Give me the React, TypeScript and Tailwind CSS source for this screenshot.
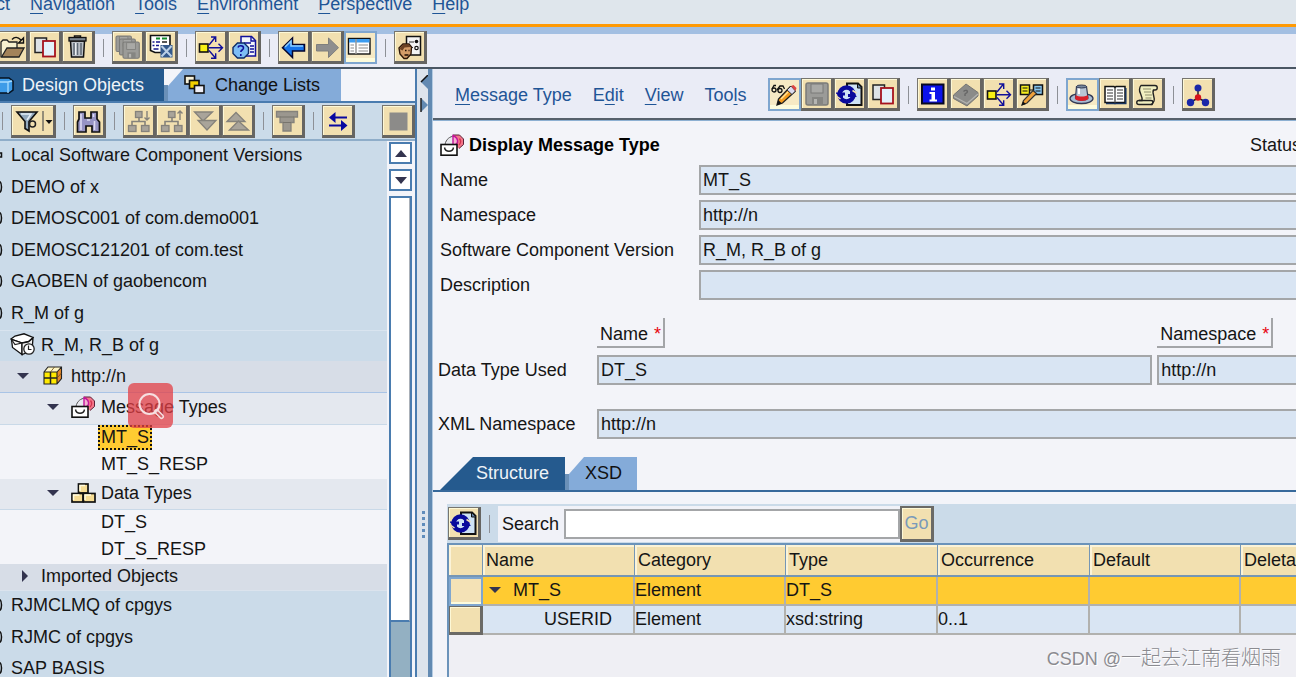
import React from "react";

type Children = { children: React.ReactNode };

/* ---------- toolbar primitives ---------- */

function ToolButton({
  label,
  pressed = false,
  wide = false,
  children,
}: Children & { label: string; pressed?: boolean; wide?: boolean }) {
  const look = pressed
    ? "border-2 border-[#7fa6cf] bg-[#f6e9c4] pb-px pr-px shadow-[inset_0_-4px_0_#fdfbdc]"
    : "border-t border-l border-b-[3px] border-r-[3px] border-t-[#77756f] border-l-[#77756f] border-b-[#666562] border-r-[#666562] bg-[#f2e0b0] pt-px pl-px shadow-[inset_1px_1px_0_#fdf8d6]";
  return (
    <button type="button" aria-label={label} className={`${look} h-[33px] shrink-0 ${wide ? "w-[45px]" : "w-[33px]"}`}>
      <svg viewBox={wide ? "0 0 40 28" : "0 0 28 28"} className={wide ? "block h-7 w-10" : "block size-7"} aria-hidden="true">
        {children}
      </svg>
    </button>
  );
}

function Sep() {
  return (
    <span className="flex h-[33px] w-[17px] shrink-0 items-center justify-center">
      <span className="h-[18px] w-px bg-[#8d9096]" />
    </span>
  );
}

function Mnemonic({ text, at = 0 }: { text: string; at?: number }) {
  return (
    <button type="button" className="whitespace-nowrap text-[#1f5596]">
      {text.slice(0, at)}
      <span className="underline decoration-1 underline-offset-3">{text[at]}</span>
      {text.slice(at + 1)}
    </button>
  );
}

/* ---------- icons ---------- */

const CopyIcon = (
  <g>
    <rect x="4" y="5" width="11.500" height="14.500" fill="#dde2e6" stroke="#222" strokeWidth="1.500" />
    <rect x="12" y="8" width="12" height="15.500" fill="#e3f1fb" stroke="#a5121d" strokeWidth="1.800" />
  </g>
);

const WhereUsedIcon = (
  <g stroke="#10109a" strokeWidth="1.4" fill="none">
    <rect x="2.500" y="11" width="8.500" height="8" fill="#f8f013" stroke="#111" strokeWidth="1.600" />
    <path d="M11.500 14.800H25M21.500 10.800l4 4-4 4M12 12l6.500-8M14 4h4.700v5M12 17.500l6.500 7.500M14 25.300h4.700v-5" />
  </g>
);

const RefreshIcon = (
  <g>
    <path d="M11 3.500h11l3.500 3.500V25H11z" fill="#cfe3f5" stroke="#111" strokeWidth="2" />
    <path d="M21.500 4v4h4" fill="#5e7fa5" stroke="#111" />
    <circle cx="10.500" cy="14.500" r="7" fill="#cfe3f5" stroke="#0a0a9c" strokeWidth="4.500" />
    <path d="M0 12.500h9v3H7v3L0 13.500zM20.500 17h-8.500v-3h2v-3l6.500 5z" fill="#0a0a9c" />
    <path d="M1 16.500l3.500 2.500M16.500 10.500l4 2.500" stroke="#f2e0b0" strokeWidth="1.500" />
  </g>
);

const Floppy = ({ x, y, s }: { x: number; y: number; s: number }) => (
  <g transform={`translate(${x} ${y}) scale(${s})`}>
    <rect x="0" y="0" width="22" height="22" rx="2" fill="#9b9b98" stroke="#7b7b78" strokeWidth="1.5" />
    <rect x="5" y="1" width="12" height="9" fill="#a9a9a6" stroke="#7b7b78" strokeWidth="1" />
    <rect x="6" y="14" width="11" height="8" fill="#858582" />
    <rect x="8" y="16" width="3" height="5" fill="#b5b5b2" />
  </g>
);

const grayBox = { fill: "#a9a49a", stroke: "#85827b", strokeWidth: 1.3 };

const HierarchyBase = (
  <g>
    <path d="M14 10v5M7 18v-3.500h13V18" fill="none" stroke="#85827b" strokeWidth="1.600" />
    <rect x="10.500" y="4.500" width="6.500" height="6" {...grayBox} />
    <rect x="3.500" y="18.500" width="7.500" height="6" {...grayBox} />
    <rect x="16.500" y="18.500" width="7.500" height="6" {...grayBox} />
  </g>
);

function MessageTypeIcon() {
  return (
    <svg viewBox="0 0 24 22" className="h-[22px] w-6 shrink-0" aria-hidden="true">
      <path d="M5 10.500C6 5 10 2.500 14 2v9z" fill="#e9e9ee" stroke="#555" strokeWidth="1" />
      <path d="M13 1h6.500l4 4v5.500L19 14.500l-6-3.500z" fill="#f4768a" />
      <path d="M13 1h6.500l4 4v5.500L19 14.500" fill="none" stroke="#5a2138" strokeWidth="1" />
      <path d="M13 11V1.500c3.500 1.500 5 4 4.500 7L14.500 12" fill="#f3b3cf" stroke="#c4129c" strokeWidth="1.400" />
      <path d="M19.500 4.500c1.500 2 1.500 4.500-.5 6.500" fill="none" stroke="#d2334f" strokeWidth="1.300" />
      <rect x="1" y="10.500" width="16" height="10.700" fill="#fff" stroke="#111" strokeWidth="1.600" />
      <path d="M4.500 13.500c1 5 8 5 9 0" fill="none" stroke="#222" strokeWidth="1.400" />
    </svg>
  );
}

function VersionIcon() {
  return (
    <svg viewBox="0 0 25 23" className="h-[23px] w-[25px] shrink-0" aria-hidden="true">
      <path d="M1 6l4-3 9-2.200 9 3.700-4.500 4L12 10z" fill="#fff" stroke="#111" strokeWidth="1.300" />
      <path d="M1.500 6.500l1 8L12 21.500V10z" fill="#fff" stroke="#111" strokeWidth="1.300" />
      <path d="M12 10v11.500l10-4 1-12.500-4.500 4z" fill="#f4f4f4" stroke="#111" strokeWidth="1.300" />
      <path d="M1.500 6.500l3.500 5 7-1.500" fill="none" stroke="#222" strokeWidth="1.200" />
      <circle cx="19" cy="16" r="5.200" fill="#fff" stroke="#222" strokeWidth="1.300" />
      <path d="M18.500 12.500v4h3" fill="none" stroke="#222" strokeWidth="1.200" />
    </svg>
  );
}

function NamespaceIcon() {
  return (
    <svg viewBox="0 0 20 19" className="h-[19px] w-5 shrink-0" aria-hidden="true">
      <path d="M1 6l4-5h13.500l-4 5z" fill="#fff6c5" />
      <path d="M14 6l4.500-5v11.500L14 18z" fill="#e6892e" />
      <rect x="1" y="6" width="13" height="12" fill="#ffe900" />
      <path d="M1 6l4-5h13.500v11.500L14 18H1zM1 6h13v12M14 6l4.500-5" fill="none" stroke="#222" strokeWidth="1.100" />
      <path d="M7.500 6v12M1 12h13" stroke="#222" strokeWidth="1.500" />
      <path d="M14 12l4.500-5M7.500 6l4-5" stroke="#6b4a10" strokeWidth=".8" />
    </svg>
  );
}

function DataTypesIcon() {
  return (
    <svg viewBox="0 0 25 20" className="h-5 w-[25px] shrink-0" aria-hidden="true">
      <g fill="#f6dc93" stroke="#111" strokeWidth="1.700">
        <rect x="7.500" y="1" width="9.500" height="9" />
        <rect x="1" y="10.500" width="11" height="8.500" />
        <rect x="12.500" y="10.500" width="11.500" height="8.500" />
      </g>
      <path d="M9 8V2.500h5M2.500 17v-5h6M14 17v-5h6" fill="none" stroke="#fffbe0" strokeWidth="1.500" />
    </svg>
  );
}

function Caret({ right = false }: { right?: boolean }) {
  return (
    <svg viewBox="0 0 12 12" className="size-3 shrink-0" aria-hidden="true">
      <path d={right ? "M3 0v12l6-6z" : "M0 3h12l-6 6z"} fill="#33344f" />
    </svg>
  );
}

/* ---------- top bars ---------- */

function MainMenu() {
  return (
    <nav className="h-[27px] shrink-0 overflow-hidden border-b-[3px] border-[#ff9a05] bg-[#dfe6ec]">
      <div className="-mt-2 -ml-1 flex gap-5 leading-6">
        <span className="text-[#1f5596]">ct</span>
        <Mnemonic text="Navigation" />
        <Mnemonic text="Tools" />
        <Mnemonic text="Environment" />
        <Mnemonic text="Perspective" />
        <Mnemonic text="Help" />
      </div>
    </nav>
  );
}

function MainToolbar() {
  return (
    <div className="flex h-[42px] shrink-0 items-start border-b-2 border-[#4a5663] bg-[linear-gradient(#a3bfe2_7px,#eaecf6_7px)] pt-1">
      <div className="-ml-1 flex">
        <ToolButton label="Open">
          <path d="M3 24V9l2-2h4l2 2h8v6" fill="#f7f0cf" stroke="#222" strokeWidth="1.3" />
          <path d="M3.500 24L9 15h17l-5 9z" fill="#a3835a" stroke="#222" strokeWidth="1.300" />
          <path d="M14 6.500Q18 2 23 7M25.500 5v5h-5z" fill="none" stroke="#111" strokeWidth="1.400" />
        </ToolButton>
        <ToolButton label="Copy">{CopyIcon}</ToolButton>
        <ToolButton label="Delete">
          <path d="M10.500 4.500V3h6v1.500" fill="none" stroke="#111" strokeWidth="1.500" />
          <path d="M6.500 8h14l-1 16h-12z" fill="#b9bfc6" stroke="#111" strokeWidth="1.500" />
          <path d="M10 10v12M13.500 10v12M17 10v12" stroke="#5f6a76" strokeWidth="1.500" />
          <path d="M11.700 10v12" stroke="#f2f5f8" strokeWidth="1.200" />
          <rect x="5" y="4.500" width="17" height="3.500" fill="#7b858f" stroke="#111" strokeWidth="1.300" />
        </ToolButton>
        <Sep />
        <ToolButton label="Save all">
          <Floppy x={2} y={3} s={0.7} />
          <Floppy x={5.5} y={6} s={0.72} />
          <Floppy x={9} y={9} s={0.74} />
        </ToolButton>
        <ToolButton label="Activate list">
          <path d="M3.500 2.500h19.500v17H8l-4.500-2z" fill="#fff" stroke="#111" strokeWidth="1.600" />
          <path d="M9 5.500h4M15 5.500h5" stroke="#118a2c" strokeWidth="1.800" />
          <path d="M5.500 9h2M9 9h4M5.500 12.500h2M9 12.500h3M6.500 16h5" stroke="#14148c" strokeWidth="1.600" />
          <path d="M15 9h5" stroke="#111" strokeWidth="1.400" />
          <rect x="13.500" y="12" width="12" height="12.500" fill="#33598c" />
          <path d="M14.500 13l10 10.500M24.500 13l-10 10.500" stroke="#b9cfe6" strokeWidth="2" />
        </ToolButton>
        <Sep />
        <ToolButton label="Where used">{WhereUsedIcon}</ToolButton>
        <ToolButton label="Help document">
          <path d="M11 3.500h10.500l4 4V23H11z" fill="#f3f6fb" stroke="#10109a" strokeWidth="1.500" />
          <path d="M21 3.500v4.500h4.500M14 10h7M20 13h4M20 16h4M20 19h4" fill="none" stroke="#10109a" strokeWidth="1.400" />
          <path d="M7.500 10h6.500l4.500 4.500v6L14 25H7.500L3 20.500v-6z" fill="#7dbdf5" stroke="#0d2b66" strokeWidth="1.400" />
          <path d="M8 14.500c.5-2.500 5.500-2.500 5.500.500 0 2-2.700 2-2.700 4M10.800 21v2" fill="none" stroke="#10109a" strokeWidth="1.600" />
        </ToolButton>
        <Sep />
        <ToolButton label="Back">
          <path d="M2.500 14.700L12.500 5v6.500h12V18h-12v6.500z" fill="#1673ea" stroke="#05052e" strokeWidth="1.500" />
          <path d="M5 14l6-6v5h12" fill="none" stroke="#8fd0ff" strokeWidth="1.500" />
        </ToolButton>
        <ToolButton label="Forward">
          <path d="M25.500 14.700L15.500 5v6.500h-12V18h12v6.500z" fill="#8e8e8e" stroke="#7f7f7d" strokeWidth="1" />
        </ToolButton>
        <ToolButton label="Navigation area" pressed>
          <rect x="2.500" y="5.500" width="21.500" height="15.500" fill="#fff" stroke="#111" strokeWidth="1.400" />
          <rect x="3" y="6" width="20.500" height="3.500" fill="#3c9cf0" />
          <path d="M10 6v15" stroke="#9a9a9a" strokeWidth="1.500" />
          <path d="M4.500 12h3.500M4.500 15h3.500M4.500 18h3.500M12.500 12H22M12.500 15H22M12.500 18H22" stroke="#8b8b8b" strokeWidth="1.200" />
        </ToolButton>
        <Sep />
        <ToolButton label="User settings">
          <rect x="10.500" y="3.500" width="14" height="18.500" fill="#f4f4f4" stroke="#111" strokeWidth="1.500" />
          <path d="M13 9h5M14 14.500h3" stroke="#333" strokeWidth="1.200" />
          <circle cx="20.500" cy="8.500" r="1.800" fill="#111" />
          <circle cx="20.500" cy="15" r="1.700" fill="#fff" stroke="#111" strokeWidth="1.200" />
          <path d="M3 15l4-4h6l2.500 3-.5 7-4 4.500H8L4 21z" fill="#d49c68" stroke="#2d1709" strokeWidth="1.400" />
          <path d="M3.500 16l3.500-4.500h6L14.500 14l-6 .5-2 3z" fill="#6b4123" />
          <path d="M9 17.500h1.500M12.500 17.500h1M8.500 22h4" stroke="#1d0d04" strokeWidth="1.300" />
        </ToolButton>
      </div>
    </div>
  );
}

/* ---------- navigation panel ---------- */

function NavTabs() {
  return (
    <div role="tablist" className="flex h-[34px] shrink-0 border-b-2 border-[#4a7caf] bg-[#f3f4f9]">
      <button type="button" role="tab" aria-selected="true" className="flex w-[164px] shrink-0 items-center gap-2 bg-[#255a8e] pb-px text-[#eef3f8]">
        <svg viewBox="0 0 14 18" className="h-[18px] w-3.5 shrink-0" aria-hidden="true">
          <path d="M-4 5l4-3h9l4 3v9l-4 3H-4z" fill="#3d9be8" stroke="#06121f" strokeWidth="1.500" />
          <path d="M-2 6h10l4-1M8 6v11" fill="none" stroke="#a7dcff" strokeWidth="1.300" />
        </svg>
        Design Objects
      </button>
      <span className="h-4 w-1 shrink-0 self-end bg-[#6a90b8]" />
      <button
        type="button"
        role="tab"
        aria-selected="false"
        className="flex w-[173px] shrink-0 items-center gap-2.5 bg-[#84abd9] pb-px pl-4 text-[#111] [clip-path:polygon(15px_0,100%_0,100%_100%,0_100%,0_17px)]"
      >
        <svg viewBox="0 0 21 19" className="h-[19px] w-[21px] shrink-0" aria-hidden="true">
          <g stroke="#111" strokeWidth="1.600">
            <rect x="1" y="1" width="9.500" height="8" fill="#f5f0d8" />
            <rect x="5.500" y="5.500" width="9.500" height="8" fill="#f2cf00" />
            <rect x="10.500" y="10.500" width="9.500" height="7.500" fill="#eeeef6" />
          </g>
        </svg>
        Change Lists
      </button>
    </div>
  );
}

function NavToolbar() {
  return (
    <div className="flex h-[38px] shrink-0 items-center overflow-hidden border-b-2 border-[#8fadc9] bg-[#cbdbe9]">
      <div className="-ml-1.5 flex">
        <Sep />
        <ToolButton label="Filter" wide>
          <path d="M4 5h20l-8 9.500V24l-4-2.500v-7z" fill="#93a9bd" stroke="#111" strokeWidth="1.600" />
          <path d="M8 7h10l-4 6" fill="none" stroke="#e4edf5" strokeWidth="1.500" />
          <circle cx="19.500" cy="17" r="3" fill="none" stroke="#222" strokeWidth="1.500" />
          <path d="M30 4v20" stroke="#555" strokeWidth="1.200" />
          <path d="M32.500 13h7l-3.500 4z" fill="#111" />
        </ToolButton>
        <Sep />
        <ToolButton label="Find">
          <path d="M4 5h6v6h6V5h6v7l2.500 3v10h-7.500v-6h-6v6H2.500V15L4 12z" fill="#9794c4" stroke="#111" strokeWidth="1.700" />
          <path d="M6 7v16M18.500 7v3M19.500 14v9M12 13h3" stroke="#dcdaf2" strokeWidth="1.600" />
        </ToolButton>
        <Sep />
        <ToolButton label="Expand subtree">
          {HierarchyBase}
          <path d="M22 4v9M19.500 10.500L22 13l2.500-2.500" fill="none" stroke="#85827b" strokeWidth="1.400" />
        </ToolButton>
        <ToolButton label="Collapse subtree">
          {HierarchyBase}
          <path d="M22 13V4M19.500 6.500L22 4l2.500 2.500" fill="none" stroke="#85827b" strokeWidth="1.400" />
        </ToolButton>
        <ToolButton label="Expand all">
          <path d="M3.500 5h18L12 14z" {...grayBox} />
          <path d="M7 13.500h18L16 23z" {...grayBox} />
        </ToolButton>
        <ToolButton label="Collapse all">
          <path d="M3 14.500L12 5.500l9 9z" {...grayBox} />
          <path d="M5.500 23l9-9 10 9z" {...grayBox} />
        </ToolButton>
        <Sep />
        <ToolButton label="Filter selection">
          <path d="M2.500 4.500h21v5.500H20v5.500h-3V24H9v-8.500H6V10H2.500z" fill="#9b978f" stroke="#85827b" strokeWidth="1.300" />
          <path d="M6 10h14M9 15.500h8" stroke="#77746d" strokeWidth="1.200" />
        </ToolButton>
        <Sep />
        <ToolButton label="Switch sides">
          <path d="M9 10.500H23M5 18.500h14" stroke="#0808a0" strokeWidth="1.800" />
          <path d="M5 10.500L11.500 5v11zM23.500 18.500L17 13v11z" fill="#0808a0" />
        </ToolButton>
      </div>
      <div className="ml-auto flex">
        <ToolButton label="Stop">
          <rect x="5.500" y="5.500" width="18" height="18" fill="#8c8b89" />
        </ToolButton>
      </div>
    </div>
  );
}

function CutMarker({ square = false }: { square?: boolean }) {
  return (
    <svg viewBox="0 0 3 14" className="h-3.5 w-[3px] shrink-0" aria-hidden="true">
      {square ? (
        <path d="M0 5h1.500v4H0" fill="none" stroke="#111" strokeWidth="1.500" />
      ) : (
        <path d="M0 1.500q1.500 1.500 1.500 5.500t-1.500 5.500" fill="none" stroke="#111" strokeWidth="1.500" />
      )}
    </svg>
  );
}

const upperComponents = [
  "Local Software Component Versions",
  "DEMO of x",
  "DEMOSC001 of com.demo001",
  "DEMOSC121201 of com.test",
  "GAOBEN of gaobencom",
  "R_M of g",
];
const lowerComponents = ["RJMCLMQ of cpgys", "RJMC of cpgys", "SAP BASIS"];

function ComponentRow({ name, square }: { name: string; square?: boolean }) {
  return (
    <li className="flex h-8 items-center gap-2 bg-[#cbdbe9] pb-[3px] odd:h-[31px]">
      <CutMarker square={square} />
      {name}
    </li>
  );
}

function Leaf({ name, selected = false }: { name: string; selected?: boolean }) {
  return (
    <li className="flex h-[27px] items-center bg-[#f3f4f9] pb-0.5 pl-[98px]">
      <span
        className={
          selected
            ? "border-2 border-dotted border-[#111] bg-[#ffcb31] px-px leading-[21px]"
            : "px-[3px] leading-[21px]"
        }
      >
        {name}
      </span>
    </li>
  );
}

function ZoomBadge() {
  return (
    <button
      type="button"
      aria-label="Zoom image"
      className="absolute -top-2.5 left-32 z-10 flex size-[45px] items-center justify-center rounded-md bg-[#e33f46]/75"
    >
      <svg viewBox="0 0 28 28" className="size-7" fill="none" stroke="#f6dfe0" aria-hidden="true">
        <circle cx="12.500" cy="12" r="10" strokeWidth="2" />
        <path d="M19.500 19.500l5 5" strokeWidth="5" strokeLinecap="round" />
        <path d="M20.500 20.500l4 4" stroke="#d5636a" strokeWidth="2" strokeLinecap="round" />
      </svg>
    </button>
  );
}

function Tree() {
  return (
    <div className="min-w-0 flex-1 overflow-hidden bg-[#cbdbe9] whitespace-nowrap text-[#151515]">
      <ul>
        {upperComponents.map((name, i) => (
          <ComponentRow key={name} name={name} square={i === 0} />
        ))}
        <li className="flex h-[31px] items-center gap-1.5 border-t border-[#d9e4ef] pb-[3px] pl-2.5">
          <VersionIcon />
          R_M, R_B of g
        </li>
        <li className="flex h-8 items-center border-b border-[#a9c4e6] bg-[#d7dde7] pb-0.5 pl-[17px]">
          <Caret />
          <span className="ml-3.5 flex items-center gap-2">
            <NamespaceIcon />
            http://n
          </span>
        </li>
        <li className="relative flex h-8 items-center border-b border-[#c9d9e8] bg-[#e4e8ef] pb-[3px] pl-[47px]">
          <Caret />
          <span className="ml-3 flex items-center gap-1.5">
            <MessageTypeIcon />
            Message Types
          </span>
          <ZoomBadge />
        </li>
        <Leaf name="MT_S" selected />
        <Leaf name="MT_S_RESP" />
        <li className="flex h-[31px] items-center border-b border-[#c9d9e8] bg-[#e4e8ef] pb-0.5 pl-[47px]">
          <Caret />
          <span className="ml-3 flex items-center gap-[5px]">
            <DataTypesIcon />
            Data Types
          </span>
        </li>
        <Leaf name="DT_S" />
        <Leaf name="DT_S_RESP" />
        <li className="flex h-[27px] items-center gap-2.5 border-b border-[#dbe3ed] bg-[#d7dde7] pb-0.5 pl-[19px]">
          <Caret right />
          Imported Objects
        </li>
      </ul>
      <ul>
        {lowerComponents.map((name) => (
          <ComponentRow key={name} name={name} />
        ))}
      </ul>
    </div>
  );
}

function ScrollBar() {
  return (
    <div className="flex w-7 shrink-0 flex-col gap-[5px] bg-[#f3f4f9] pt-px pr-[3px] pl-0.5">
      <button type="button" aria-label="Scroll up" className="flex h-[22px] shrink-0 items-center justify-center border-2 border-[#4a7caf] bg-white">
        <svg viewBox="0 0 12 7" className="h-[7px] w-3" aria-hidden="true">
          <path d="M0 7L6 0l6 7z" fill="#33344f" />
        </svg>
      </button>
      <button type="button" aria-label="Scroll down" className="flex h-[22px] shrink-0 items-center justify-center border-2 border-[#4a7caf] bg-white">
        <svg viewBox="0 0 12 7" className="h-[7px] w-3" aria-hidden="true">
          <path d="M0 0h12L6 7z" fill="#33344f" />
        </svg>
      </button>
      <div className="flex flex-1 flex-col border-2 border-b-0 border-[#4a7caf] bg-[#93b0c2]">
        <div className="h-[424px] border-r border-b-2 border-r-[#aab0b8] border-b-[#4a7caf] bg-white" />
      </div>
    </div>
  );
}

function NavigationPanel() {
  return (
    <aside className="flex w-[417px] shrink-0 flex-col border-r-2 border-[#4a7caf] bg-[#f3f4f9]">
      <NavTabs />
      <NavToolbar />
      <div className="flex min-h-0 flex-1">
        <Tree />
        <ScrollBar />
      </div>
    </aside>
  );
}

function Splitter() {
  return (
    <div className="flex w-[15px] shrink-0 flex-col items-end border-r-4 border-[#628ab2] bg-[#dde4ec] pt-1.5">
      <svg viewBox="0 0 8 44" className="h-11 w-2 shrink-0" aria-hidden="true">
        <path d="M8 0v14L1 7z" fill="#628ab2" />
        <path d="M8 0L1 7" stroke="#111" strokeWidth="1.500" />
        <path d="M1 23v14l7-7z" fill="#628ab2" />
        <path d="M1 23v14" stroke="#222" strokeWidth="1.500" />
      </svg>
      <svg viewBox="0 0 4 28" className="mt-[392px] mr-0.5 h-7 w-1 shrink-0" fill="#5f8cbb" aria-hidden="true">
        <path d="M0 0h3v3H0zM0 6h3v3H0zM0 12h3v3H0zM0 18h3v3H0zM0 24h3v3H0z" />
      </svg>
    </div>
  );
}

/* ---------- editor ---------- */

function EditorBar() {
  return (
    <div className="flex h-[51px] shrink-0 items-center gap-[21px] border-b-2 border-[#56606b] bg-[#eaecf6] pt-0.5 pl-[22px] shadow-[0_1px_0_#8db0d2]">
      <Mnemonic text="Message Type" />
      <Mnemonic text="Edit" at={1} />
      <Mnemonic text="View" />
      <Mnemonic text="Tools" at={3} />
      <div className="flex">
        <ToolButton label="Display or change" pressed>
          <path d="M2 9l2-3.500h2M7 10l3-4h3l1.500 3" fill="none" stroke="#111" strokeWidth="1.300" />
          <circle cx="4" cy="10" r="2" fill="none" stroke="#111" strokeWidth="1.300" />
          <circle cx="10" cy="10.500" r="2" fill="none" stroke="#111" strokeWidth="1.300" />
          <path d="M7 25l1.500-6L20 7l5 4.500L12.500 23z" fill="#f39a1e" stroke="#222" strokeWidth="1.300" />
          <path d="M17 10l5 4.500 3.500-3.500L21 6z" fill="#dcdcf0" stroke="#333" strokeWidth="1" />
          <path d="M21 6l4.500 5 1-3-3-3z" fill="#d44" />
          <path d="M7 25l1.200-5 3.800 3.500z" fill="#111" />
          <path d="M11 19l7-7" stroke="#ffe49a" strokeWidth="1.400" />
        </ToolButton>
        <ToolButton label="Save">
          <Floppy x={3} y={3} s={1} />
        </ToolButton>
        <ToolButton label="Refresh">{RefreshIcon}</ToolButton>
        <ToolButton label="Copy object">{CopyIcon}</ToolButton>
        <Sep />
        <ToolButton label="Information">
          <rect x="3" y="4.500" width="21.500" height="19" fill="#0c12ea" stroke="#080820" strokeWidth="2" />
          <path d="M12 7.500h4v3h-4zM10.500 12H16v7.500h2v2h-7.500v-2h2V14h-2z" fill="#fff" />
        </ToolButton>
        <ToolButton label="Documentation">
          <path d="M1.500 15L14 4l12 8.500v3.500L15 26 1.500 18.500z" fill="#8b8b89" stroke="#757573" strokeWidth="1" />
          <path d="M2 16.500l13 7 11-9.500" fill="none" stroke="#b4b4b1" strokeWidth="1.200" />
          <path d="M11.500 11.500c2-2 5-1 3.500 1l-2 1.500v2" fill="none" stroke="#666" strokeWidth="1.400" />
        </ToolButton>
        <ToolButton label="Where used list">{WhereUsedIcon}</ToolButton>
        <ToolButton label="Edit notes">
          <rect x="2.500" y="5" width="9" height="9.500" fill="#f6ee1d" stroke="#111" strokeWidth="1.500" />
          <rect x="15.500" y="5" width="9" height="9.500" fill="#86c5ef" stroke="#111" strokeWidth="1.500" />
          <path d="M4.500 8h5M4.500 11h5M17.500 8h5M17.500 11h5M11.500 10h4" stroke="#111" strokeWidth="1.200" />
          <path d="M4 25l1.500-4.500L15 10.500l3.500 3L9 23z" fill="#f0a13a" stroke="#333" strokeWidth="1.200" />
          <path d="M3.500 25.500l1.500-4 3 2.500z" fill="#111" />
        </ToolButton>
        <Sep />
        <ToolButton label="Display mode" pressed>
          <ellipse cx="13.500" cy="18.500" rx="11.500" ry="5" fill="#a9bdd4" stroke="#333a55" strokeWidth="1.300" />
          <path d="M7.500 18L8.500 6.500h10l1.500 11.500c-2 3-10 3-12.500 0z" fill="#b8c6d6" stroke="#333a55" strokeWidth="1.200" />
          <path d="M7.700 15c3 2 9 2 12 0l.8 4c-3 2.500-11 2.500-13.500 0z" fill="#d8202a" />
          <path d="M11 8v6" stroke="#fff" strokeWidth="2" />
          <ellipse cx="13.500" cy="6.500" rx="5" ry="1.500" fill="#77889c" stroke="#333a55" />
        </ToolButton>
        <ToolButton label="Table view">
          <path d="M4 6.500h9l1 1 1-1h9v16h-9l-1 1-1-1H4z" fill="#fff" stroke="#111" strokeWidth="1.500" />
          <path d="M24.800 8v15.500H5" fill="none" stroke="#17335f" strokeWidth="1.500" />
          <path d="M14 7.500V23M6 10h6M6 13h6M6 16h6M6 19h6M16 10h6M16 13h6M16 16h6M16 19h6" stroke="#333" strokeWidth="1.200" />
        </ToolButton>
        <ToolButton label="Log">
          <path d="M7 5.500h14c3 0 3 4.500 0 4.500h-1.500c-2 3 2 8 .5 11l-2 3.500H5c-3 0-3-4 0-4h3c1-4-3-8-2.500-11 .2-2 .8-3.500 1.500-4z" fill="#f1efc0" stroke="#222" strokeWidth="1.400" />
          <path d="M5 20.500h12c2.500 0 2.500 3.500 0 4" fill="none" stroke="#222" strokeWidth="1.300" />
          <path d="M9 9h8M10 12h7M11 15h7M11.500 18h6" stroke="#8d8d6d" strokeWidth="1.200" />
        </ToolButton>
        <Sep />
        <ToolButton label="Object relations">
          <path d="M14 8v10L7 22M14 18l8 4" fill="none" stroke="#222" strokeWidth="1.500" />
          <circle cx="14" cy="8" r="3.500" fill="#1a27a8" />
          <circle cx="14" cy="17.500" r="3.200" fill="#d6131d" />
          <circle cx="6.500" cy="22.500" r="3.700" fill="#1a27a8" />
          <circle cx="21.500" cy="22.500" r="3.700" fill="#1a27a8" />
        </ToolButton>
      </div>
    </div>
  );
}

const fieldLook =
  "h-[30px] w-full min-w-0 border-2 border-r-0 border-[#a4a6a8] bg-[#d9e5f3] pl-0.5 text-[#151515] outline-none";

const attributes = [
  { id: "name", label: "Name", value: "MT_S" },
  { id: "namespace", label: "Namespace", value: "http://n" },
  { id: "swcv", label: "Software Component Version", value: "R_M, R_B of g" },
  { id: "description", label: "Description", value: "" },
];

function ColumnCaption({ text }: { text: string }) {
  return (
    <span className="flex h-[30px] w-max items-center gap-1.5 border-r-2 border-b-2 border-[#a3a5a8] pt-[3px] pr-0.5 pl-[3px]">
      {text}
      <span className="text-red-600">*</span>
    </span>
  );
}

function Attributes() {
  return (
    <div className="grid grid-cols-[259px_minmax(0,1fr)] items-center gap-y-[5px] pl-[7px]">
      {attributes.map(({ id, label, value }) => (
        <React.Fragment key={id}>
          <label htmlFor={id} className="whitespace-nowrap">
            {label}
          </label>
          <input id={id} readOnly defaultValue={value} className={fieldLook} />
        </React.Fragment>
      ))}
    </div>
  );
}

function DataTypeBlock() {
  return (
    <div className="grid grid-cols-[154px_minmax(0,4fr)_minmax(0,1fr)] items-center gap-x-[5px] pt-[18px] pl-[5px] whitespace-nowrap">
      <span />
      <ColumnCaption text="Name" />
      <ColumnCaption text="Namespace" />
      <label htmlFor="dt-name" className="mt-[7px]">
        Data Type Used
      </label>
      <input id="dt-name" readOnly defaultValue="DT_S" className={`${fieldLook} mt-[7px] border-r-2`} />
      <input aria-label="Data type namespace" readOnly defaultValue="http://n" className={`${fieldLook} mt-[7px]`} />
      <label htmlFor="xml-ns" className="mt-6">
        XML Namespace
      </label>
      <input id="xml-ns" readOnly defaultValue="http://n" className={`${fieldLook} col-span-2 mt-6`} />
    </div>
  );
}

function EditorTabs() {
  return (
    <div role="tablist" className="mt-[18px] flex h-[35px] shrink-0 border-b-2 border-[#37699b] pl-[7px]">
      <button
        type="button"
        role="tab"
        aria-selected="true"
        className="w-[125px] bg-[#255a8e] pr-4 pb-0.5 text-right text-[#eef3f8] [clip-path:polygon(33px_0,100%_0,100%_100%,0_100%)]"
      >
        Structure
      </button>
      <span className="h-4 w-1 self-end bg-[#6a90b8]" />
      <button
        type="button"
        role="tab"
        aria-selected="false"
        className="w-[68px] bg-[#84abd9] pr-[15px] pb-0.5 text-right text-[#111] [clip-path:polygon(15px_0,100%_0,100%_100%,0_100%,0_17px)]"
      >
        XSD
      </button>
    </div>
  );
}

const headings = ["Category", "Type", "Occurrence", "Default", "Deletable"];
const headLook =
  "h-8 overflow-hidden border-r border-b-2 border-[#7596b5] bg-[#f2e0b0] p-0 pl-[3px] text-left font-normal shadow-[inset_2px_2px_0_#fbf3d8]";
const cellLook = "h-[29px] border-r-2 border-b-2 border-[#b1b1ae] p-0 pb-0.5";

function StructureTable() {
  return (
    <div className="min-h-0 flex-1 overflow-hidden border-t-2 border-l-2 border-[#6b93ba] bg-[#efeff4]">
      <table className="w-[944px] table-fixed border-separate border-spacing-0 whitespace-nowrap">
        <colgroup>
          <col className="w-[34px]" />
          <col className="w-[152px]" />
          <col className="w-[151px]" />
          <col className="w-[152px]" />
          <col className="w-[152px]" />
          <col className="w-[151px]" />
          <col className="w-[152px]" />
        </colgroup>
        <thead>
          <tr>
            <th className={headLook} aria-label="Selection" />
            <th className={headLook}>Name</th>
            {headings.map((h) => (
              <th key={h} className={headLook}>
                {h}
              </th>
            ))}
          </tr>
        </thead>
        <tbody>
          <tr className="bg-[#ffcb31]">
            <td className="p-0">
              <button type="button" aria-label="Select MT_S" className="block h-[29px] w-[34px] border-2 border-[#7fa6cf] bg-[#f4e2b6] shadow-[inset_0_-2px_0_#fdfbdc]" />
            </td>
            <td className={cellLook}>
              <span className="flex items-center gap-3 pl-1.5">
                <Caret />
                MT_S
              </span>
            </td>
            <td className={cellLook}>Element</td>
            <td className={cellLook}>DT_S</td>
            <td className={cellLook} />
            <td className={cellLook} />
            <td className={cellLook} />
          </tr>
          <tr className="bg-[#d9e5f3]">
            <td className="p-0">
              <button type="button" aria-label="Select USERID" className="block h-[29px] w-[34px] border-t border-l border-r-[3px] border-b-[3px] border-[#6b6a66] bg-[#f2e0b0] shadow-[inset_1px_1px_0_#fdf8d6]" />
            </td>
            <td className={cellLook}>
              <span className="pl-[61px]">USERID</span>
            </td>
            <td className={cellLook}>Element</td>
            <td className={cellLook}>xsd:string</td>
            <td className={cellLook}>0..1</td>
            <td className={cellLook} />
            <td className={cellLook} />
          </tr>
        </tbody>
      </table>
    </div>
  );
}

function StructurePane() {
  return (
    <div className="flex min-h-0 flex-1 flex-col pt-3 pl-[14px]">
      <div className="flex h-[39px] shrink-0 items-center bg-[#cbdbe9] pl-px">
        <ToolButton label="Refresh structure">{RefreshIcon}</ToolButton>
        <Sep />
        <div className="flex h-9 items-center bg-[#f1f2f8] pl-1">
          <label htmlFor="search" className="pr-[5px]">
            Search
          </label>
          <input id="search" className="h-[30px] w-[336px] border-2 border-[#a4a6a8] bg-white px-1 outline-none" />
          <button
            type="button"
            className="h-9 w-[34px] border-t-2 border-r-[3px] border-b-[3px] border-l-2 border-[#6b6a66] bg-[#f2e0b0] text-[#7a9aba] shadow-[inset_1px_1px_0_#fdf8d6]"
          >
            Go
          </button>
        </div>
      </div>
      <StructureTable />
    </div>
  );
}

function Editor() {
  return (
    <main className="flex min-w-0 flex-1 flex-col overflow-hidden border-l border-[#b4cbe2] bg-[#f3f4f9] text-[#151515]">
      <EditorBar />
      <header className="flex h-[45px] shrink-0 items-center pt-1 pl-[7px]">
        <MessageTypeIcon />
        <h1 className="ml-[5px] font-bold whitespace-nowrap text-black">Display Message Type</h1>
        <span className="ml-auto w-[46px] shrink-0 whitespace-nowrap">Status</span>
      </header>
      <Attributes />
      <DataTypeBlock />
      <EditorTabs />
      <StructurePane />
    </main>
  );
}

export default function App() {
  return (
    <div className="relative flex h-screen flex-col overflow-hidden bg-[#f3f4f9] font-['Liberation_Sans',Arial,sans-serif] text-[18px] leading-6">
      <MainMenu />
      <MainToolbar />
      <div className="flex min-h-0 flex-1">
        <NavigationPanel />
        <Splitter />
        <Editor />
      </div>
      <p className="absolute right-[15px] bottom-1.5 text-[#8b8b90] [text-shadow:1px_1px_0_#fff]">
        CSDN @<span className="font-['Noto_Sans_CJK_SC',sans-serif] text-[20px] font-light">一起去江南看烟雨</span>
      </p>
    </div>
  );
}
